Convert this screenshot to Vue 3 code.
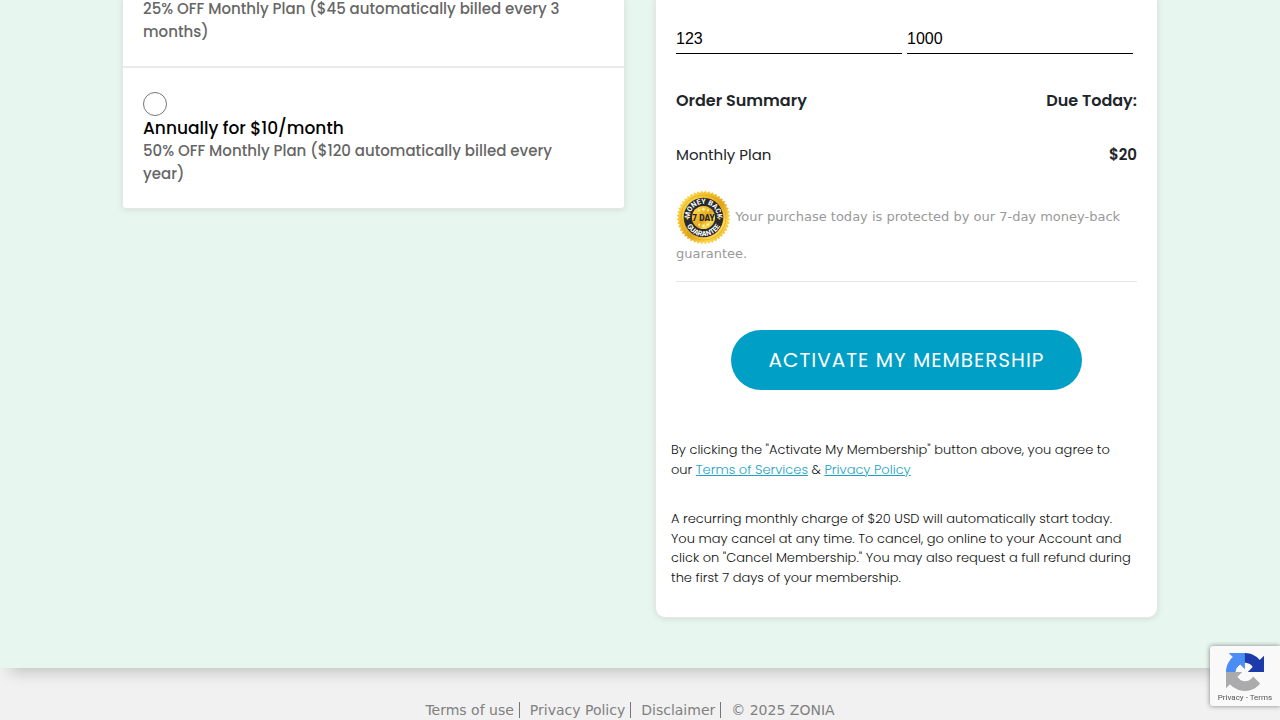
<script setup>
import { ref } from 'vue'

const plan = ref('monthly')
const cvv = ref('123')
const zip = ref('1000')

const teeth = 44
const sealPoints = Array.from({ length: teeth * 2 }, (_, i) => {
  const angle = (i * Math.PI) / teeth
  const radius = i % 2 ? 49 : 45
  return `${50 + radius * Math.cos(angle)},${50 + radius * Math.sin(angle)}`
}).join(' ')
</script>

<template>
  <div class="page">
    <main class="content">
      <div class="columns">
        <section class="card plans">
          <div class="plan">
            <p class="plan-note">25% OFF Monthly Plan ($45 automatically billed every 3 months)</p>
          </div>
          <div class="plan">
            <input id="annual" v-model="plan" class="radio" type="radio" name="plan" value="annual">
            <label for="annual" class="plan-name">Annually for $10/month</label>
            <p class="plan-note">50% OFF Monthly Plan ($120 automatically billed every year)</p>
          </div>
        </section>

        <form class="card checkout" @submit.prevent>
          <div class="order">
            <div class="fields">
              <input v-model="cvv" class="field" type="text" aria-label="CVV">
              <input v-model="zip" class="field" type="text" aria-label="Postal code">
            </div>
            <div class="row heading">
              <strong>Order Summary</strong>
              <strong>Due Today:</strong>
            </div>
            <div class="row item">
              <span>Monthly Plan</span>
              <strong>$20</strong>
            </div>
            <p class="guarantee">
              <svg class="seal" viewBox="0 0 100 100" role="img" aria-label="7 day money back guarantee">
                <defs>
                  <linearGradient id="gold" x1="0" y1="0" x2="1" y2="1">
                    <stop offset="0" stop-color="#ffe873" />
                    <stop offset=".3" stop-color="#f5c42d" />
                    <stop offset=".55" stop-color="#e3a61b" />
                    <stop offset=".75" stop-color="#ffd94d" />
                    <stop offset="1" stop-color="#d39a12" />
                  </linearGradient>
                  <path id="arc-top" d="M25 50a25 25 0 0 1 50 0" />
                  <path id="arc-bottom" d="M16 50a34 34 0 0 0 68 0" />
                </defs>
                <polygon :points="sealPoints" fill="url(#gold)" />
                <circle cx="50" cy="50" r="41" fill="none" stroke="#d9a11a" stroke-width="1" />
                <circle cx="50" cy="50" r="36" fill="#282a2e" />
                <circle cx="50" cy="50" r="21" fill="url(#gold)" />
                <g class="seal-text">
                  <text font-size="13"><textPath href="#arc-top" startOffset="50%" text-anchor="middle">MONEY BACK</textPath></text>
                  <text font-size="13"><textPath href="#arc-bottom" startOffset="50%" text-anchor="middle">GUARANTEE</textPath></text>
                </g>
                <text class="seal-day" x="50" y="56" font-size="15" text-anchor="middle">7 DAY</text>
                <g fill="#fff3b0">
                  <circle cx="42" cy="37" r="2" /><circle cx="50" cy="35" r="2.5" /><circle cx="58" cy="37" r="2" />
                  <circle cx="42" cy="63" r="2" /><circle cx="50" cy="65" r="2.5" /><circle cx="58" cy="63" r="2" />
                </g>
                <circle cx="21" cy="52" r="2" fill="#f2c02c" /><circle cx="79" cy="52" r="2" fill="#f2c02c" />
              </svg>
              Your purchase today is protected by our 7-day money-back guarantee.
            </p>
          </div>
          <button class="activate" type="submit">ACTIVATE MY MEMBERSHIP</button>
          <p class="legal">
            By clicking the "Activate My Membership" button above, you agree to our
            <a href="#terms">Terms of Services</a> &amp; <a href="#privacy">Privacy Policy</a>
          </p>
          <p class="legal">
            A recurring monthly charge of $20 USD will automatically start today. You may cancel at any time. To cancel, go online to your Account and click on "Cancel Membership." You may also request a full refund during the first 7 days of your membership.
          </p>
        </form>
      </div>
    </main>

    <footer class="footer">
      <a href="#terms">Terms of use</a>
      <a href="#privacy">Privacy Policy</a>
      <a href="#disclaimer">Disclaimer</a>
      <span>© 2025 ZONIA</span>
    </footer>

    <aside class="captcha">
      <svg class="captcha-logo" viewBox="0 0 64 64" aria-hidden="true">
        <path fill="#1c3aa9" d="M64 31.955l-.033-1.37V4.687l-7.16 7.16C50.948 4.674 42.033.093 32.05.093c-10.4 0-19.622 4.96-25.458 12.64l11.736 11.86a15.55 15.55 0 0 1 4.754-5.334c2.05-1.6 4.952-2.906 8.968-2.906.485 0 .86.057 1.135.163 4.976.393 9.288 3.14 11.828 7.124l-8.307 8.307L64 31.953" />
        <path fill="#4a8df5" d="M31.862.094l-1.37.033H4.594l7.16 7.16C4.58 13.147 0 22.06 0 32.046c0 10.4 4.96 19.622 12.64 25.458L24.5 45.768a15.55 15.55 0 0 1-5.334-4.754c-1.6-2.05-2.906-4.952-2.906-8.968 0-.485.057-.86.163-1.135.393-4.976 3.14-9.288 7.124-11.828l8.307 8.307L31.86.095" />
        <path fill="#ababab" d="M.001 32.045l.033 1.37v25.898l7.16-7.16c5.86 7.173 14.774 11.754 24.76 11.754 10.4 0 19.622-4.96 25.458-12.64l-11.736-11.86a15.55 15.55 0 0 1-4.754 5.334c-2.05 1.6-4.952 2.906-8.968 2.906-.485 0-.86-.057-1.135-.163-4.976-.393-9.288-3.14-11.828-7.124l8.307-8.307c-10.522.04-22.4.066-27.295-.005" />
      </svg>
      <div class="captcha-links"><a href="#privacy">Privacy</a> - <a href="#terms">Terms</a></div>
    </aside>
  </div>
</template>

<style>
html,
body {
  height: 100%;
  overflow: hidden;
}
</style>

<style scoped>
* {
  box-sizing: border-box;
}
.page {
  min-height: 100vh;
  display: flex;
  flex-direction: column;
  background: #f1f1f1;
  color: #212529;
  font-family: Poppins, Inter, sans-serif;
}
p {
  margin: 0;
}
.content {
  margin-top: -2px;
  padding-bottom: 50px;
  background: #e7f6ef;
  box-shadow: 10px 4px 15px rgba(0, 0, 0, 0.2);
}
.columns {
  display: grid;
  grid-template-columns: 1fr 1fr;
  gap: 30px;
  align-items: start;
  max-width: 1036px;
  margin: 0 auto;
}
.card {
  background: #fff;
  border: 1px solid #e6e8e7;
  border-top: 0;
  box-shadow: 0 1px 6px rgba(0, 0, 0, 0.1);
}
.plans {
  border-radius: 0 0 4px 4px;
}
.plan {
  padding: 24px 40px 23px 20px;
}
.plan:first-child {
  padding-top: 0;
  border-bottom: 2px solid #e9eaea;
}
.radio {
  appearance: none;
  display: block;
  width: 24px;
  height: 24px;
  margin: 0;
  border: 1px solid #767676;
  border-radius: 50%;
}
.plan-name {
  display: block;
  font-size: 17px;
  line-height: 24px;
  font-weight: 500;
  color: #000;
}
.plan-note {
  font-size: 15px;
  line-height: 1.5;
  font-weight: 500;
  color: #666;
}
.checkout {
  display: flex;
  flex-direction: column;
  padding: 26px 15px 30px;
  border-radius: 0 0 10px 10px;
}
.order {
  margin: 0 5px;
  border-bottom: 1px solid #e6e6e6;
}
.fields {
  display: flex;
  gap: 5px;
  padding-right: 4px;
}
.field {
  flex: 1;
  min-width: 0;
  height: 30px;
  padding: 0;
  border: 0;
  border-bottom: 1px solid #000;
  background: none;
  font: 16px "Liberation Sans", sans-serif;
  color: #000;
}
.row {
  display: flex;
  justify-content: space-between;
  line-height: 24px;
}
.row strong {
  font-weight: 600;
}
.heading {
  margin-top: 35px;
  font-size: 16px;
}
.item {
  margin-top: 30px;
  font-size: 15px;
}
.guarantee {
  margin-top: 23px;
  padding-bottom: 18px;
  font: 13px/18px "DejaVu Sans", sans-serif;
  color: #999;
}
.seal {
  width: 55px;
  height: 55px;
  vertical-align: middle;
}
.seal-text {
  font-family: Roboto, sans-serif;
  font-weight: 700;
  fill: #fff;
}
.seal-day {
  font-family: Roboto, sans-serif;
  font-weight: 900;
  fill: #25262a;
}
.activate {
  align-self: center;
  height: 60px;
  margin: 48px 0 50px;
  padding: 0 38px;
  border: 0;
  border-radius: 30px;
  background: #009fc6;
  color: #fff;
  font: 400 20px Poppins, Inter, sans-serif;
  letter-spacing: 1px;
}
.legal {
  padding-right: 9px;
  font-size: 13px;
  line-height: 1.5;
  font-weight: 300;
  color: #111;
}
.legal + .legal {
  margin-top: 30px;
}
.legal a {
  color: #1ca2c4;
}
.footer {
  display: flex;
  justify-content: center;
  padding: 34px 20px 0 0;
  font: 14px/16px "DejaVu Sans", sans-serif;
  color: #808080;
}
.footer a {
  margin-right: 10px;
  padding-right: 5px;
  border-right: 1px solid #777;
  color: inherit;
  text-decoration: none;
}
.captcha {
  position: fixed;
  right: 0;
  bottom: 14px;
  width: 70px;
  height: 60px;
  padding-top: 7px;
  border-radius: 3px 0 0 3px;
  background: #f9f9f9;
  box-shadow: 0 0 5px gray;
  text-align: center;
}
.captcha-logo {
  display: block;
  width: 38px;
  height: 38px;
  margin: 0 auto;
}
.captcha-links {
  margin-top: 2px;
  font: 8px/10px Roboto, sans-serif;
  color: #555;
}
.captcha-links a {
  color: inherit;
  text-decoration: none;
}
</style>
